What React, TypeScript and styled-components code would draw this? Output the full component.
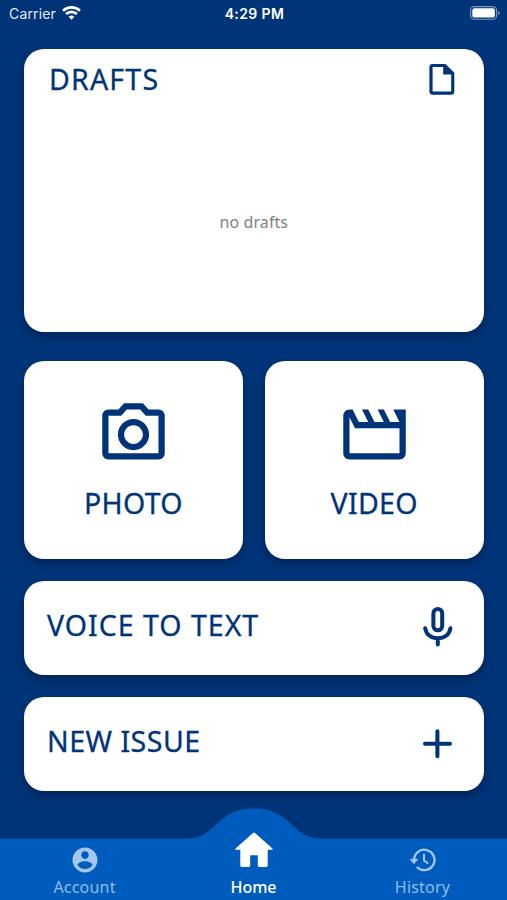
import React from "react";
import styled, { createGlobalStyle } from "styled-components";

const NAVY = "#003478";
const BLUE = "#005cbc";

const GlobalStyle = createGlobalStyle`
  * { box-sizing: border-box; }
  html, body { margin: 0; padding: 0; background: ${NAVY}; }
  button { border: 0; margin: 0; font: inherit; color: inherit; background: none; }
  svg { display: block; }
`;

const Screen = styled.div`
  width: 507px;
  height: 900px;
  overflow: hidden;
  display: flex;
  flex-direction: column;
  background: ${NAVY};
  color: ${NAVY};
  font-family: "Noto Sans", "Open Sans", sans-serif;
`;

const StatusBar = styled.header`
  height: 28px;
  flex: none;
  display: grid;
  grid-template-columns: 1fr auto 1fr;
  align-items: center;
  padding: 0 7px 2px 9px;
  color: #fff;
  font-family: Inter, sans-serif;
  font-size: 14px;
`;

const Carrier = styled.div`
  display: flex;
  align-items: center;
  gap: 6px;
  color: #e3ebf5;
  letter-spacing: 0.15px;
`;

const Clock = styled.div`
  font-weight: 600;
  letter-spacing: 0.4px;
`;

const Battery = styled.div`
  justify-self: end;
`;

const Main = styled.main`
  flex: none;
  height: 772px;
  padding: 20.6px 23.4px 0 24px;
  display: flex;
  flex-direction: column;
`;

const Card = styled.section`
  background: #fff;
  border-radius: 20px;
  box-shadow: 0 5px 9px rgba(0, 10, 40, 0.36);
`;

const DraftsCard = styled(Card)`
  height: 283.4px;
  display: flex;
  flex-direction: column;
`;

const DraftsHeader = styled.div`
  height: 61px;
  padding: 0 29px 0 25px;
  display: flex;
  align-items: center;
  justify-content: space-between;
`;

const Title = styled.span<{ $spacing: number }>`
  font-size: 28.5px;
  line-height: 36px;
  white-space: nowrap;
  letter-spacing: ${(p) => p.$spacing}px;
  -webkit-text-stroke: 0.3px ${NAVY};
`;

const Empty = styled.p`
  margin: 101px 0 0;
  text-align: center;
  font-size: 16px;
  line-height: 22px;
  letter-spacing: 0.1px;
  color: #808080;
`;

const Tiles = styled.div`
  display: grid;
  grid-template-columns: 1fr 1fr;
  gap: 22px;
  margin-top: 28.6px;
`;

const Tile = styled(Card).attrs({ as: "button" })`
  height: 198px;
  padding: 36px 0 0;
  display: flex;
  flex-direction: column;
  align-items: center;
  gap: 13px;
`;

const ActionRow = styled(Card).attrs({ as: "button" })`
  height: 94px;
  margin-top: 22.2px;
  padding: 0 31px 5px 23px;
  display: flex;
  align-items: center;
  justify-content: space-between;
`;

const RowIcon = styled.span<{ $drop: number }>`
  margin-top: ${(p) => p.$drop}px;
`;

const TabBar = styled.nav`
  position: relative;
  height: 100px;
  flex: none;
  display: grid;
  grid-template-columns: repeat(3, 1fr);
  align-items: end;
`;

const TabShape = styled.svg`
  position: absolute;
  inset: 0;
`;

const Tab = styled.button<{ $active?: boolean }>`
  position: relative;
  height: 100px;
  padding: 0 0 2px;
  display: flex;
  flex-direction: column;
  justify-content: flex-end;
  align-items: center;
  gap: ${(p) => (p.$active ? 8 : 1)}px;
  color: ${(p) => (p.$active ? "#fff" : "#8fbcec")};
  font-size: 16px;
  line-height: 22px;
  font-weight: ${(p) => (p.$active ? 500 : 400)};
`;

const TabLabel = styled.span<{ $spacing: number }>`
  letter-spacing: ${(p) => p.$spacing}px;
`;

const WifiIcon = () => (
  <svg width="19" height="14" viewBox="0 0 19 14" fill="none" stroke="#fff" strokeWidth="2.6">
    <path d="M1 4.7C5.8.2 13.2.2 18 4.7" />
    <path d="M4.1 8C7.2 5.1 11.8 5.1 14.9 8" />
    <path d="M9.5 13.8 6.6 10.7C8.3 9.1 10.7 9.1 12.4 10.7Z" fill="#fff" stroke="none" />
  </svg>
);

const BatteryIcon = () => (
  <svg width="30" height="14" viewBox="0 0 30 14">
    <rect x="0.6" y="0.6" width="26" height="12.6" rx="3.8" fill="none" stroke="#7f9abc" strokeWidth="1.1" />
    <rect x="2.3" y="2.2" width="22.6" height="9.4" rx="2.2" fill="#fff" />
    <path d="M28.2 4.8c1.9.8 1.9 3.6 0 4.4z" fill="#7f9abc" />
  </svg>
);

const FileIcon = () => (
  <svg width="26" height="31" viewBox="0 0 26 31">
    <path
      fill={NAVY}
      fillRule="evenodd"
      d="M3.5 0H16.5L25.3 8.8V27.5A3.2 3.2 0 0 1 22.1 30.7H3.5A3.2 3.2 0 0 1 .4 27.5V3.2A3.2 3.2 0 0 1 3.5 0ZM3.6 3.1V27.6H22.2V10.4H14.2V3.1Z"
    />
  </svg>
);

const CameraIcon = () => (
  <svg width="75" height="75" viewBox="0 0 24 24" fill={NAVY}>
    <path d="M14.12 4l1.83 2H20v12H4V6h4.05l1.83-2h4.24M15 2H9L7.17 4H4c-1.1 0-2 .9-2 2v12c0 1.1.9 2 2 2h16c1.1 0 2-.9 2-2V6c0-1.1-.9-2-2-2h-3.17L15 2zm-3 7c1.65 0 3 1.35 3 3s-1.35 3-3 3-3-1.35-3-3 1.35-3 3-3m0-2c-2.76 0-5 2.24-5 5s2.24 5 5 5 5-2.24 5-5-2.24-5-5-5z" />
  </svg>
);

const ClapperIcon = () => (
  <svg width="75" height="75" viewBox="0 0 24 24" fill={NAVY}>
    <path d="M5.76 10H20v8H4V6.47M22 4h-4l2 4h-3l-2-4h-2l2 4h-3l-2-4H8l2 4H7L5 4H4c-1.1 0-1.99.9-1.99 2L2 18c0 1.1.9 2 2 2h16c1.1 0 2-.9 2-2V4z" />
  </svg>
);

const MicIcon = () => (
  <svg width="30" height="40" viewBox="0 0 30 40" fill="none" stroke={NAVY} strokeWidth="4" strokeLinecap="round">
    <rect x="10.4" y="2" width="8.8" height="21.3" rx="4.4" />
    <path d="M2.2 21.3C3.4 27.8 8.4 31.2 14.8 31.2S26.2 27.8 27.4 21.3M14.8 31.5V37.6" />
  </svg>
);

const PlusIcon = () => (
  <svg width="30" height="30" viewBox="0 0 30 30" fill="none" stroke={NAVY} strokeWidth="4" strokeLinecap="round">
    <path d="M14.4 2.2V27.2M2 14.7H27" />
  </svg>
);

const AccountIcon = () => (
  <svg width="30" height="30" viewBox="0 0 24 24" fill="#a3c7ef">
    <path d="M12 2C6.48 2 2 6.48 2 12s4.48 10 10 10 10-4.48 10-10S17.52 2 12 2zm0 3c1.66 0 3 1.34 3 3s-1.34 3-3 3-3-1.34-3-3 1.34-3 3-3zm0 14.2c-2.5 0-4.71-1.28-6-3.22.03-1.99 4-3.08 6-3.08 1.99 0 5.97 1.09 6 3.08-1.29 1.94-3.5 3.22-6 3.22z" />
  </svg>
);

const HomeIcon = () => (
  <svg width="38" height="36" viewBox="0 0 38 36" fill="#fff">
    <path d="M18 .9Q19 .1 20 .9L37.2 16.3Q38.2 17.8 36.8 17.8H32.7V33.6Q32.7 35 31.3 35H24Q22.8 35 22.8 33.6V23.2H15.2V33.6Q15.2 35 14 35H6.7Q5.3 35 5.3 33.6V17.8H1.2Q-.2 17.8.8 16.3Z" />
  </svg>
);

const HistoryIcon = () => (
  <svg width="26" height="30" viewBox="0 0 26 30" fill="none" stroke="#a3c7ef" strokeWidth="2.3" strokeLinecap="round">
    <path d="M4.1 14.8A10.2 10.2 0 1 1 7.6 22.6" />
    <path d="M14 9.4V15.5L17.6 18" strokeWidth="2" />
    <path d="M.5 14.3H7.7L4.1 18.4Z" fill="#a3c7ef" strokeWidth="1" strokeLinejoin="round" />
  </svg>
);

export default function App() {
  return (
    <>
      <GlobalStyle />
      <Screen>
        <StatusBar>
          <Carrier>
            <span>Carrier</span>
            <WifiIcon />
          </Carrier>
          <Clock>4:29 PM</Clock>
          <Battery>
            <BatteryIcon />
          </Battery>
        </StatusBar>
        <Main>
          <DraftsCard>
            <DraftsHeader>
              <Title $spacing={1.2}>DRAFTS</Title>
              <FileIcon />
            </DraftsHeader>
            <Empty>no drafts</Empty>
          </DraftsCard>
          <Tiles>
            <Tile>
              <CameraIcon />
              <Title $spacing={0.3}>PHOTO</Title>
            </Tile>
            <Tile>
              <ClapperIcon />
              <Title $spacing={0.3}>VIDEO</Title>
            </Tile>
          </Tiles>
          <ActionRow>
            <Title $spacing={1}>VOICE TO TEXT</Title>
            <RowIcon $drop={3}>
              <MicIcon />
            </RowIcon>
          </ActionRow>
          <ActionRow>
            <Title $spacing={0.5}>NEW ISSUE</Title>
            <RowIcon $drop={5}>
              <PlusIcon />
            </RowIcon>
          </ActionRow>
        </Main>
        <TabBar>
          <TabShape width="507" height="100" viewBox="0 0 507 100">
            <path
              fill={BLUE}
              d="M0 38.6H188C216 38.6 216 8.5 254 8.5S292 38.6 320 38.6H507V100H0Z"
            />
          </TabShape>
          <Tab>
            <AccountIcon />
            <TabLabel $spacing={0.2}>Account</TabLabel>
          </Tab>
          <Tab $active>
            <HomeIcon />
            <TabLabel $spacing={0}>Home</TabLabel>
          </Tab>
          <Tab>
            <HistoryIcon />
            <TabLabel $spacing={0.2}>History</TabLabel>
          </Tab>
        </TabBar>
      </Screen>
    </>
  );
}
